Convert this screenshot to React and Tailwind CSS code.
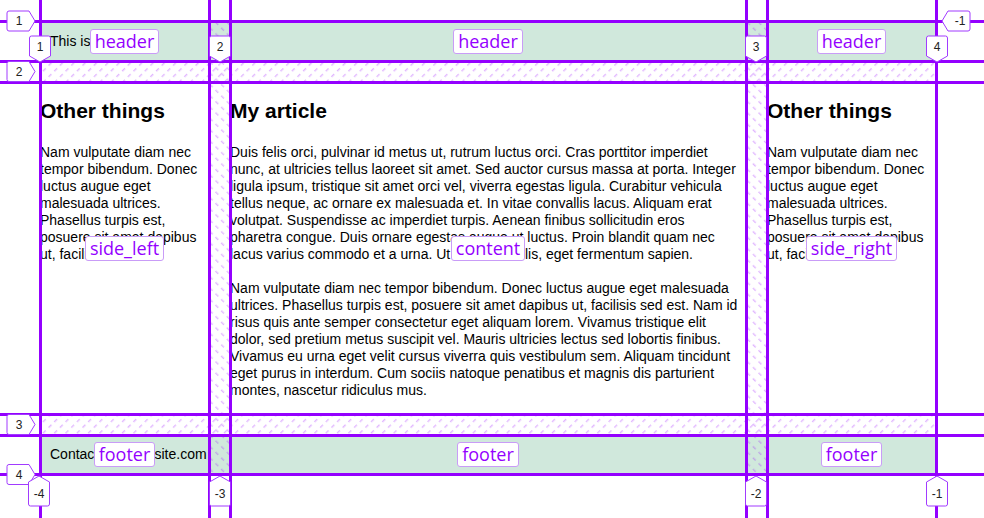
const PURPLE = '#9400ff';

// left edge of each 3px grid line
const COL_LINES = [39, 208, 229, 745, 766, 935];
const ROW_LINES = [20, 60, 81, 413, 434, 473];

const GRID = 'grid w-[896px] grid-cols-[169px_516px_169px] grid-rows-[40px_332px_39px] gap-[21px]';

const AREAS = ['header', 'header', 'header', 'side_left', 'content', 'side_right', 'footer', 'footer', 'footer'];

const sideText = [
  'Nam vulputate diam nec',
  'tempor bibendum. Donec',
  'luctus augue eget',
  'malesuada ultrices.',
  'Phasellus turpis est,',
  'posuere sit amet dapibus',
  'ut, facilisis sed est.',
];

const article1 = [
  'Duis felis orci, pulvinar id metus ut, rutrum luctus orci. Cras porttitor imperdiet',
  'nunc, at ultricies tellus laoreet sit amet. Sed auctor cursus massa at porta. Integer',
  'ligula ipsum, tristique sit amet orci vel, viverra egestas ligula. Curabitur vehicula',
  'tellus neque, ac ornare ex malesuada et. In vitae convallis lacus. Aliquam erat',
  'volutpat. Suspendisse ac imperdiet turpis. Aenean finibus sollicitudin eros',
  'pharetra congue. Duis ornare egestas augue ut luctus. Proin blandit quam nec',
  'lacus varius commodo et a urna. Ut id ornare felis, eget fermentum sapien.',
];

const article2 = [
  'Nam vulputate diam nec tempor bibendum. Donec luctus augue eget malesuada',
  'ultrices. Phasellus turpis est, posuere sit amet dapibus ut, facilisis sed est. Nam id',
  'risus quis ante semper consectetur eget aliquam lorem. Vivamus tristique elit',
  'dolor, sed pretium metus suscipit vel. Mauris ultricies lectus sed lobortis finibus.',
  'Vivamus eu urna eget velit cursus viverra quis vestibulum sem. Aliquam tincidunt',
  'eget purus in interdum. Cum sociis natoque penatibus et magnis dis parturient',
  'montes, nascetur ridiculus mus.',
];

const Lines = ({ lines, className = '' }) => (
  <p className={`whitespace-nowrap leading-[17px] ${className}`}>
    {lines.map((l, i) => (
      <span key={i} className="block">
        {l}
      </span>
    ))}
  </p>
);

const Side = () => (
  <aside>
    <h2 className="mt-[17px] mb-[21px] text-[21px] leading-[24px] font-bold whitespace-nowrap">
      Other things
    </h2>
    <Lines lines={sideText} />
  </aside>
);

const tagText = {
  fontFamily: "'Liberation Sans', Arial, sans-serif",
  fontSize: 12,
  fill: '#222',
  textAnchor: 'middle',
};

const RightTag = ({ y, label }) => (
  <g>
    <path
      d={`M9 ${y - 10} H29 L35 ${y} L29 ${y + 10} H9 Q7 ${y + 10} 7 ${y + 8} V${y - 8} Q7 ${y - 10} 9 ${y - 10} Z`}
      fill="white"
      stroke="#a13bff"
      strokeWidth="1"
    />
    <text x="19" y={y + 4} style={tagText}>
      {label}
    </text>
  </g>
);

const DownTag = ({ x, label }) => (
  <g>
    <path
      d={`M${x - 10.5} 38 Q${x - 10.5} 36 ${x - 8.5} 36 H${x + 8.5} Q${x + 10.5} 36 ${x + 10.5} 38 V56 L${x} 62 L${x - 10.5} 56 Z`}
      fill="white"
      stroke="#a13bff"
      strokeWidth="1"
    />
    <text x={x} y="51" style={tagText}>
      {label}
    </text>
  </g>
);

const UpTag = ({ x, label }) => (
  <g>
    <path
      d={`M${x} 476 L${x + 10.5} 482 V504 Q${x + 10.5} 506 ${x + 8.5} 506 H${x - 8.5} Q${x - 10.5} 506 ${x - 10.5} 504 V482 Z`}
      fill="white"
      stroke="#a13bff"
      strokeWidth="1"
    />
    <text x={x} y="498" style={tagText}>
      {label}
    </text>
  </g>
);

const GridLines = () => (
  <svg className="pointer-events-none absolute inset-0" width="984" height="518">
    <defs>
      <pattern id="hatchCol" width="8" height="8" patternUnits="userSpaceOnUse" patternTransform="rotate(-45)">
        <rect x="0" y="0" width="1.4" height="4" fill={PURPLE} fillOpacity="0.28" />
      </pattern>
      <pattern id="hatchRow" width="8" height="8" patternUnits="userSpaceOnUse" patternTransform="rotate(45)">
        <rect x="0" y="0" width="1.4" height="4" fill={PURPLE} fillOpacity="0.28" />
      </pattern>
    </defs>

    {/* gaps */}
    <rect x="40" y="61" width="896" height="21" fill="url(#hatchRow)" />
    <rect x="40" y="414" width="896" height="21" fill="url(#hatchRow)" />
    <rect x="209" y="21" width="21" height="453" fill="url(#hatchCol)" />
    <rect x="746" y="21" width="21" height="453" fill="url(#hatchCol)" />

    {/* lines run across the whole viewport */}
    {COL_LINES.map((x) => (
      <rect key={`c${x}`} x={x} y="0" width="3" height="518" fill={PURPLE} />
    ))}
    {ROW_LINES.map((y) => (
      <rect key={`r${y}`} x="0" y={y} width="984" height="3" fill={PURPLE} />
    ))}

    {/* line numbers */}
    <RightTag y={21} label="1" />
    <RightTag y={71.5} label="2" />
    <RightTag y={424.5} label="3" />
    <RightTag y={474.5} label="4" />

    <g>
      <path
        d="M942 21 L948 11 H968 Q970 11 970 13 V29 Q970 31 968 31 H948 Z"
        fill="white"
        stroke="#a13bff"
        strokeWidth="1"
      />
      <text x="960" y="25" style={tagText}>
        -1
      </text>
    </g>

    <DownTag x={40} label="1" />
    <DownTag x={220} label="2" />
    <DownTag x={756} label="3" />
    <DownTag x={937} label="4" />

    <UpTag x={39} label="-4" />
    <UpTag x={220} label="-3" />
    <UpTag x={756} label="-2" />
    <UpTag x={937} label="-1" />
  </svg>
);

export default function App() {
  return (
    <div className="relative h-[518px] w-[984px] overflow-hidden bg-white font-['Liberation_Sans',Arial,sans-serif] text-[14px] text-black">
      <div className="pl-[40px] pt-[21px]">
        <div className={GRID}>
          <header className="col-span-3 flex items-center bg-[#d0e8dc] pl-[10px]">This is my blog</header>
          <Side />
          <main>
            <h2 className="mt-[17px] mb-[21px] text-[21px] leading-[24px] font-bold">My article</h2>
            <Lines lines={article1} />
            <Lines lines={article2} className="mt-[17px]" />
          </main>
          <Side />
          <footer className="col-span-3 flex items-center bg-[#d0e8dc] pl-[10px]">Contact me@mysite.com</footer>
        </div>
      </div>

      <GridLines />

      {/* area names, one per cell, laid on the same grid */}
      <div className="pointer-events-none absolute inset-0 pl-[40px] pt-[21px]">
        <div className={GRID}>
          {AREAS.map((name, i) => (
            <div key={i} className="flex items-center justify-center">
              <span className="rounded-[3px] border border-[#c99cf7] bg-white px-[4px] font-['Open_Sans',sans-serif] text-[18px] leading-[23px] text-[#9400ff]">
                {name}
              </span>
            </div>
          ))}
        </div>
      </div>
    </div>
  );
}
